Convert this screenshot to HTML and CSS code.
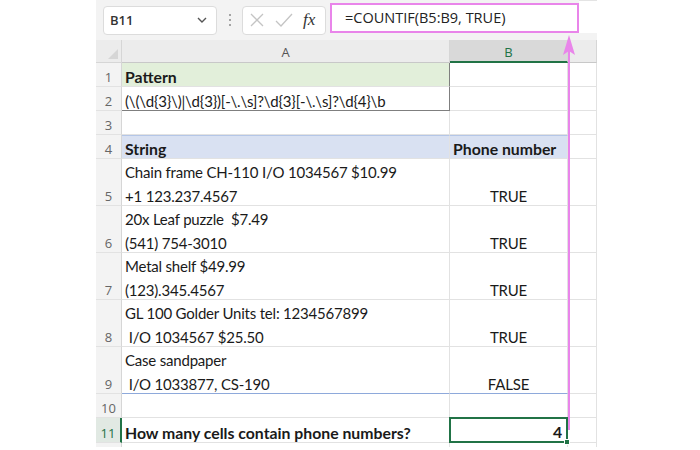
FILE: index.html
```html
<!DOCTYPE html>
<html lang="en">

<head>
  <meta charset="UTF-8">
  <title>COUNTIF phone numbers</title>
  <link rel="stylesheet" href="styles.css">
</head>

<body>
  <div class="excel">
    <div class="toolbar">
      <div class="namebox">
        <span>B11</span>
        <svg class="chev" width="10" height="6" viewBox="0 0 10 6"><path d="M1 1 L5 5 L9 1" fill="none" stroke="#555" stroke-width="1.4"/></svg>
      </div>
      <div class="dots"><i></i><i></i><i></i></div>
      <div class="fxbox">
        <svg width="16" height="16" viewBox="0 0 16 16"><path d="M2 2 L14 14 M14 2 L2 14" stroke="#c4c4c4" stroke-width="1.3"/></svg>
        <svg width="18" height="16" viewBox="0 0 18 16"><path d="M1 9 L6 14 L17 2" fill="none" stroke="#c4c4c4" stroke-width="1.3"/></svg>
        <span class="fx">fx</span>
      </div>
      <div class="formula">=COUNTIF(B5:B9, TRUE)</div>
      <div class="rest"></div>
    </div>

    <div class="sheet">
      <div class="corner"><svg width="10" height="10" viewBox="0 0 10 10"><path d="M10 0 L10 10 L0 10 Z" fill="#d6d6d6"/></svg></div>
      <div class="colhead">A</div>
      <div class="colhead active">B</div>
      <div class="colhead"></div>

      <div class="rowhead">1</div>
      <div class="cell bold green box-r">Pattern</div>
      <div class="cell"></div>
      <div class="cell"></div>

      <div class="rowhead">2</div>
      <div class="cell box-r box-b">(\(\d{3}\)|\d{3})[-\.\s]?\d{3}[-\.\s]?\d{4}\b</div>
      <div class="cell"></div>
      <div class="cell"></div>

      <div class="rowhead">3</div>
      <div class="cell"></div>
      <div class="cell"></div>
      <div class="cell"></div>

      <div class="rowhead">4</div>
      <div class="cell bold blue">String</div>
      <div class="cell bold blue">Phone number</div>
      <div class="cell"></div>

      <div class="rowhead">5</div>
      <div class="cell two">Chain frame CH-110 I/O 1034567 $10.99<br>+1 123.237.4567</div>
      <div class="cell center">TRUE</div>
      <div class="cell"></div>

      <div class="rowhead">6</div>
      <div class="cell two">20x Leaf puzzle  $7.49<br>(541) 754-3010</div>
      <div class="cell center">TRUE</div>
      <div class="cell"></div>

      <div class="rowhead">7</div>
      <div class="cell two">Metal shelf $49.99<br>(123).345.4567</div>
      <div class="cell center">TRUE</div>
      <div class="cell"></div>

      <div class="rowhead">8</div>
      <div class="cell two">GL 100 Golder Units tel: 1234567899<br> I/O 1034567 $25.50</div>
      <div class="cell center">TRUE</div>
      <div class="cell"></div>

      <div class="rowhead">9</div>
      <div class="cell two tbl-b">Case sandpaper<br> I/O 1033877, CS-190</div>
      <div class="cell center tbl-b">FALSE</div>
      <div class="cell"></div>

      <div class="rowhead">10</div>
      <div class="cell"></div>
      <div class="cell"></div>
      <div class="cell"></div>

      <div class="rowhead active">11</div>
      <div class="cell bold">How many cells contain phone numbers?</div>
      <div class="cell right selected">4<span class="handle"></span></div>
      <div class="cell"></div>

      <div class="rowhead last"></div>
      <div class="cell last"></div>
      <div class="cell last"></div>
      <div class="cell last"></div>
    </div>

    <svg class="arrow" width="20" height="440" viewBox="0 0 20 440">
      <line x1="10" y1="48" x2="10" y2="430" stroke="#e985ea" stroke-width="2"/>
      <polygon points="10,35 16,55 10,51 4,55" fill="#e985ea"/>
    </svg>
  </div>
</body>

</html>
```

FILE: styles.css
```css
* {
  margin: 0;
  padding: 0;
  box-sizing: border-box;
}

body {
  background: #ffffff;
  font-family: 'Lato', 'Liberation Sans', sans-serif;
  color: #1a1a1a;
}

.excel {
  position: relative;
  margin-left: 96px;
  width: 501px;
  height: 450px;
}

/* formula bar */
.toolbar {
  display: flex;
  align-items: center;
  height: 40px;
  padding-left: 7px;
  background: #f3f3f3;
}

.namebox {
  display: flex;
  align-items: center;
  justify-content: space-between;
  width: 114px;
  height: 29px;
  padding: 0 9px 0 6px;
  background: #fff;
  border: 1px solid #dcdcdc;
  border-radius: 4px;
  font-family: 'Open Sans', sans-serif;
  font-size: 13px;
  font-weight: 600;
  color: #333;
}

.dots {
  width: 25px;
  display: flex;
  flex-direction: column;
  align-items: center;
  gap: 3px;
}

.dots i {
  width: 2px;
  height: 2px;
  background: #8a8a8a;
  border-radius: 50%;
}

.fxbox {
  display: flex;
  align-items: center;
  gap: 10px;
  width: 84px;
  height: 29px;
  padding-left: 6px;
  background: #fff;
  border: 1px solid #dcdcdc;
  border-radius: 4px;
}

.fx {
  font-family: 'Liberation Serif', serif;
  font-style: italic;
  font-size: 17px;
  color: #333;
}

.formula {
  width: 249px;
  height: 30px;
  margin-left: 4px;
  margin-top: -4px;
  padding-left: 13px;
  border: 2px solid #e985ea;
  background: #fff;
  font-family: 'Open Sans', sans-serif;
  font-size: 14.5px;
  line-height: 26px;
  color: #222;
}

.rest {
  flex: 1;
  align-self: stretch;
  height: 33px;
  background: #fff;
  border-top: 1px solid #e4e4e4;
}

/* grid */
.sheet {
  display: grid;
  grid-template-columns: 26px 328px 118px 29px;
  grid-template-rows: 23px 24px 24px 24px 24px 47px 47px 47px 47px 47px 24px 25px 4px;
  font-size: 15px;
  letter-spacing: -0.2px;
}

.corner {
  background: #ececec;
  border-right: 1px solid #d6d6d6;
  border-bottom: 1px solid #d6d6d6;
  display: flex;
  align-items: flex-end;
  justify-content: flex-end;
  padding: 0 3px 3px 0;
}

.colhead {
  background: #ececec;
  border-right: 1px solid #d6d6d6;
  border-bottom: 1px solid #c8c8c8;
  font-family: 'Open Sans', sans-serif;
  font-size: 13px;
  letter-spacing: 0;
  color: #555;
  display: flex;
  align-items: center;
  justify-content: center;
  padding-top: 1px;
}

.colhead.active {
  background: #d9d9d9;
  color: #217346;
  border-bottom: 2px solid #217346;
  padding-top: 2px;
}

.rowhead {
  background: #f3f3f3;
  border-right: 1px solid #d6d6d6;
  border-bottom: 1px solid #e2e2e2;
  font-family: 'Open Sans', sans-serif;
  font-size: 13px;
  letter-spacing: 0;
  line-height: 18px;
  color: #666;
  display: flex;
  align-items: flex-end;
  justify-content: center;
}

.rowhead.active {
  background: #e1e9e3;
  color: #217346;
  border-right: 2px solid #217346;
}

.cell {
  border-right: 1px solid #e2e2e2;
  border-bottom: 1px solid #e2e2e2;
  padding: 0 3px;
  display: flex;
  align-items: flex-end;
  white-space: pre;
  line-height: 18px;
}

.cell.two {
  display: block;
  padding-top: 1px;
  line-height: 24px;
}

.last {
  border-bottom: none;
  background: #fff;
}

.rowhead.last {
  background: #f3f3f3;
}

.bold {
  font-weight: 700;
  font-size: 15.8px;
  letter-spacing: 0;
}

.green {
  background: #e2efda;
}

.blue {
  background: #d9e1f2;
  border-top: 1px solid #b4c6e7;
}

.box-r {
  border-right: 1px solid #7f7f7f;
}

.box-b {
  border-bottom: 1px solid #7f7f7f;
}

.tbl-b {
  border-bottom: 1px solid #8ea9db;
}

.center {
  justify-content: center;
}

.right {
  justify-content: flex-end;
}

.selected {
  position: relative;
  border: 2px solid #217346;
  margin: -1px 0 0 -1px;
  font-weight: 700;
  font-size: 15.8px;
  padding-right: 4px;
}

.handle {
  position: absolute;
  right: -4px;
  bottom: -4px;
  width: 6px;
  height: 6px;
  background: #217346;
  border: 1px solid #fff;
}

.arrow {
  position: absolute;
  left: 463px;
  top: 0;
}
```
